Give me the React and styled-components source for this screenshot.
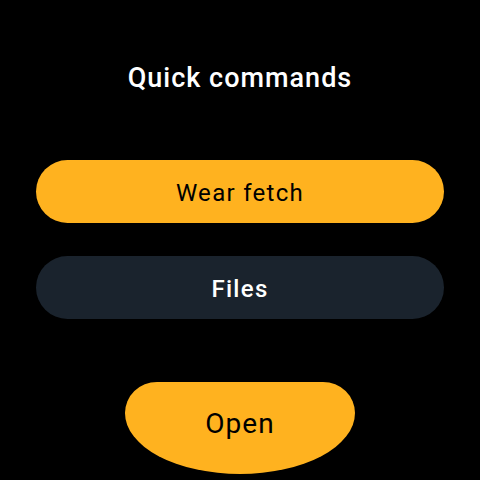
import React from "react";
import styled, { createGlobalStyle } from "styled-components";

const Global = createGlobalStyle`
  html, body {
    margin: 0;
    padding: 0;
    background: #000;
  }
  body {
    font-family: Roboto, "Noto Sans", sans-serif;
  }
`;

const Screen = styled.div`
  width: 480px;
  height: 480px;
  background: #000;
  display: flex;
  flex-direction: column;
  align-items: center;
  padding-top: 62px;
  box-sizing: border-box;
  overflow: hidden;
`;

const Title = styled.h1`
  margin: 0;
  color: #fff;
  font-size: 27px;
  line-height: 32px;
  font-weight: 500;
  letter-spacing: 1px;
`;

const List = styled.div`
  display: flex;
  flex-direction: column;
  gap: 33px;
  width: 408px;
  margin-top: 66px;
`;

const Chip = styled.button`
  height: 63px;
  border: none;
  border-radius: 32px;
  background: ${(p) => (p.$primary ? "#FFB21F" : "#1A232D")};
  color: ${(p) => (p.$primary ? "#000" : "#fff")};
  font-family: Roboto, "Noto Sans", sans-serif;
  font-size: 24px;
  font-weight: ${(p) => (p.$primary ? 400 : 500)};
  letter-spacing: 1.3px;
  padding: 2px 0 0;
`;

const EdgeButton = styled.button`
  margin-top: 63px;
  width: 230px;
  height: 92px;
  border: none;
  background: #FFB21F;
  color: #000;
  border-radius: 32px 32px 115px 115px / 31px 31px 61px 61px;
  font-family: Roboto, "Noto Sans", sans-serif;
  font-size: 28px;
  font-weight: 400;
  letter-spacing: 1px;
  padding: 0 0 10px;
`;

export default function App() {
  return (
    <Screen>
      <Global />
      <Title>Quick commands</Title>
      <List>
        <Chip $primary>Wear fetch</Chip>
        <Chip>Files</Chip>
      </List>
      <EdgeButton>Open</EdgeButton>
    </Screen>
  );
}
